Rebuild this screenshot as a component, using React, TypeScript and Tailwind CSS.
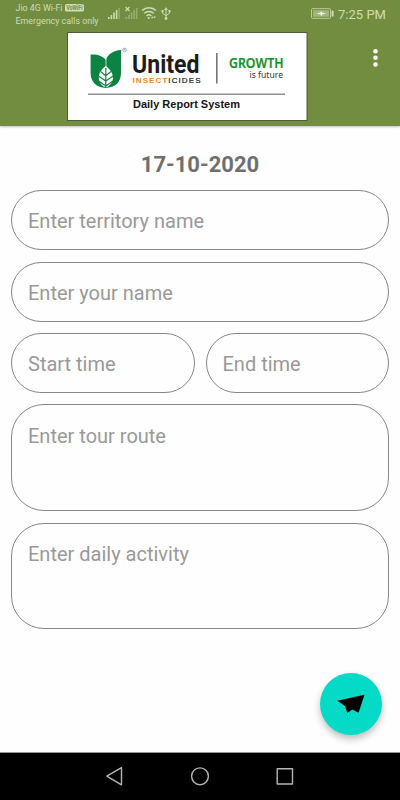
import React from "react";

function StatusBar() {
  return (
    <div className="flex h-7 items-start justify-between pl-[15px] pr-[10px] text-[#cfdcb4]">
      <div className="flex">
        <svg width="158" height="28" viewBox="0 0 158 28" fontFamily="Roboto, sans-serif" fill="currentColor">
          <text x="0.5" y="11" fontSize="9" textLength="47" lengthAdjust="spacingAndGlyphs">Jio 4G Wi-Fi</text>
          <rect x="50" y="4" width="19" height="7.6" rx="1.5" />
          <text x="51.5" y="10.3" fontSize="6.5" fontWeight="700" fill="#728d40" textLength="16" lengthAdjust="spacingAndGlyphs">VoWiFi</text>
          <text x="0.5" y="23.5" fontSize="9" textLength="83" lengthAdjust="spacingAndGlyphs">Emergency calls only</text>
          <g>
            <rect x="93" y="17" width="1.6" height="2" />
            <rect x="95.6" y="15" width="1.6" height="4" />
            <rect x="98.2" y="12.5" width="1.6" height="6.5" />
            <rect x="100.8" y="10" width="1.6" height="9" />
            <rect x="103.4" y="8" width="1.6" height="11" opacity="0.35" />
          </g>
          <path d="M110.5 7l4 4M114.5 7l-4 4" stroke="currentColor" strokeWidth="1.2" />
          <g opacity="0.4">
            <rect x="110.5" y="17" width="1.6" height="2" />
            <rect x="113.1" y="15" width="1.6" height="4" />
            <rect x="115.7" y="12.5" width="1.6" height="6.5" />
            <rect x="118.3" y="10" width="1.6" height="9" />
            <rect x="120.9" y="8" width="1.6" height="11" />
          </g>
          <g fill="none" stroke="currentColor" strokeWidth="1.4">
            <path d="M127 10.5C131 6.8 137 6.8 141 10.5" />
            <path d="M129.3 13.3C132 10.8 136 10.8 138.7 13.3" />
            <path d="M131.5 15.9C133 14.5 135 14.5 136.5 15.9" />
          </g>
          <circle cx="133.8" cy="18" r="1.1" />
          <path d="M136 18.2l1.3-2 1.3 2zM138.3 16.4h2.6l-1.3 2z" />
          <g fill="none" stroke="currentColor" strokeWidth="1">
            <path d="M151 9v9.5M147.5 11v2.2l3.5 2.5 3.5-2.5V11" />
          </g>
          <path d="M149.2 10L151 7l1.8 3zM146.5 10h2v2.2h-2zM153.5 10h2v2.2h-2z" />
          <circle cx="151" cy="18.5" r="1.4" />
        </svg>
      </div>
      <svg width="80" height="28" viewBox="0 0 80 28" fontFamily="Roboto, sans-serif" fill="currentColor">
        <rect x="1.5" y="8.7" width="19" height="9.6" rx="1" fill="none" stroke="currentColor" opacity="0.8" />
        <rect x="3" y="10.2" width="16" height="6.6" opacity="0.5" />
        <path d="M6.5 13.5l4-1 .8-1.8.8 1.8 4 1-4 1-.8 1.8-.8-1.8z" fill="#eef4df" />
        <rect x="21.6" y="10.7" width="2" height="5.8" />
        <text x="28" y="18.6" fontSize="13.5" textLength="48" lengthAdjust="spacingAndGlyphs">7:25 PM</text>
      </svg>
    </div>
  );
}

function Logo() {
  return (
    <svg width="241" height="89" viewBox="67 32 241 89" className="block">
      <rect x="67.5" y="32.5" width="239.5" height="88" fill="#fff" stroke="#4e5c35" />
      <path d="M90.6 54.5C97 54 103 56 106 60C107.5 54.5 113 50.5 121 50V73C121 82.5 115 87.5 105.8 88C96.5 87.5 90.6 82 90.6 73Z" fill="#0b8442" />
      <path d="M106 59V67" stroke="#fff" strokeWidth="0.7" />
      <path d="M105.8 66C100.5 70 98.3 74.5 98.8 79C99.3 83 102 86 105.8 87.6C109.6 86 112.4 83 112.9 79C113.3 74.5 111.2 70 105.8 66Z" fill="#fff" />
      <g stroke="#0b8442" strokeWidth="1.2" fill="none">
        <path d="M105.8 68V88M100.6 71.5L105.8 75.8 111 71.5M98.5 76L105.8 81 113.2 76M98.6 81L105.8 86 113 81" />
      </g>
      <circle cx="124.6" cy="50" r="1.9" fill="none" stroke="#888" strokeWidth="0.5" />
      <text x="124.6" y="51.2" fontSize="3.2" textAnchor="middle" fill="#777" fontFamily="Liberation Sans, sans-serif">R</text>
      <text x="132" y="72.6" fontSize="26.3" fontWeight="700" fill="#1d1b1c" textLength="67.5" lengthAdjust="spacingAndGlyphs" fontFamily="Roboto, sans-serif">United</text>
      <text x="132.5" y="82.6" fontSize="8" fontWeight="700" fill="#222" textLength="68" lengthAdjust="spacing" fontFamily="Liberation Sans, sans-serif"><tspan fill="#e28a27">INSECT</tspan><tspan fontWeight="400" stroke="#222" strokeWidth="0.2">ICIDES</tspan></text>
      <rect x="216" y="53" width="1.6" height="30.5" fill="#777" />
      <text x="229" y="68.3" fontSize="13.8" fontWeight="600" fill="#149322" stroke="#149322" strokeWidth="0.2" textLength="54.5" lengthAdjust="spacingAndGlyphs" fontFamily="Noto Sans, sans-serif">GROWTH</text>
      <text x="249.5" y="78" fontSize="9.5" fill="#333" textLength="33.5" lengthAdjust="spacingAndGlyphs" fontFamily="Noto Sans, sans-serif">is future</text>
      <rect x="88" y="93.6" width="197" height="1.2" fill="#777" />
      <text x="133" y="108" fontSize="11" fontWeight="700" fill="#151515" textLength="107" lengthAdjust="spacingAndGlyphs" fontFamily="Liberation Sans, sans-serif">Daily Report System</text>
    </svg>
  );
}

function Field({ label, size = "h-[60px] rounded-[30px] pt-[18px]" }: { label: string; size?: string }) {
  return (
    <div className={"min-w-0 flex-1 border border-[#868686] pl-4 text-[20px] leading-[24px] text-[#999999] " + size}>
      {label}
    </div>
  );
}

export default function App() {
  return (
    <div className="flex h-[800px] w-[400px] flex-col bg-[#fefefe] font-[Roboto,sans-serif]">
      <header className="h-[126px] shrink-0 bg-[#728d40] shadow-[0_1px_2px_rgba(0,0,0,0.25)]">
        <StatusBar />
        <div className="flex items-start justify-between pl-[67px] pr-[22px] pt-1">
          <Logo />
          <svg width="5" height="20" viewBox="0 0 5 20" className="mt-4" fill="#fff">
            <circle cx="2.5" cy="3.2" r="2.3" />
            <circle cx="2.5" cy="9.8" r="2.3" />
            <circle cx="2.5" cy="16.5" r="2.3" />
          </svg>
        </div>
      </header>

      <main className="flex flex-1 flex-col px-[11px] pt-[25px]">
        <h1 className="mb-[11px] text-center text-[22px] font-bold leading-[28px] text-[#6f6f6f]">17-10-2020</h1>
        <div className="flex"><Field label="Enter territory name" /></div>
        <div className="mt-[12px] flex"><Field label="Enter your name" /></div>
        <div className="mt-[11px] flex gap-[11px]">
          <Field label="Start time" />
          <Field label="End time" />
        </div>
        <div className="mt-[11px] flex"><Field label="Enter tour route" size="h-[107px] rounded-[33px] pt-[19px]" /></div>
        <div className="mt-[12px] flex"><Field label="Enter daily activity" size="h-[106px] rounded-[33px] pt-[18px]" /></div>
        <button className="mr-[7px] mt-[44px] flex size-[62px] items-center justify-center self-end rounded-full bg-[#04dac6] shadow-[0_4px_7px_rgba(0,0,0,0.25)]">
          <svg width="62" height="62" viewBox="320 673 62 62">
            <path d="M337.5 700.8L364.5 694.7 358.5 712.7 352.3 709.5 347.2 713 345.3 706.2Z" fill="#000" />
          </svg>
        </button>
      </main>

      <nav className="h-12 shrink-0 border-t border-[#999] bg-black">
        <svg width="400" height="47" viewBox="0 753 400 47" fill="none" stroke="#b5b5b5" strokeWidth="1.4" strokeLinejoin="round">
          <path d="M106.8 776.2L121.5 767.6V784.8Z" />
          <circle cx="200" cy="776.3" r="8.4" />
          <rect x="277.2" y="768.7" width="15.3" height="15.3" />
        </svg>
      </nav>
    </div>
  );
}
